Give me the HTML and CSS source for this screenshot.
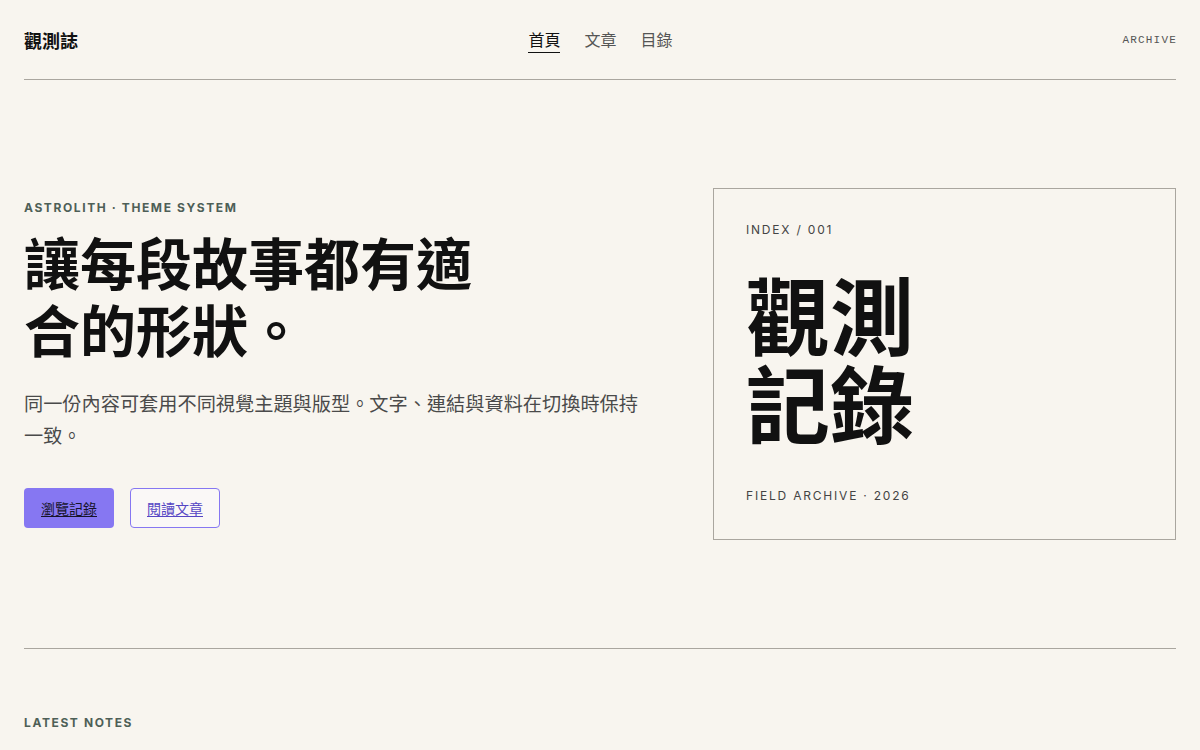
FILE: index.html
```html
<!DOCTYPE html>
<html lang="zh-Hant">
<head>
<meta charset="utf-8">
<title>觀測誌</title>
<link rel="stylesheet" href="styles.css">
</head>
<body>
<div class="page">
  <header class="site-header">
    <a class="logo" href="#">觀測誌</a>
    <nav class="nav">
      <a class="nav-item active" href="#">首頁</a>
      <a class="nav-item" href="#">文章</a>
      <a class="nav-item" href="#">目錄</a>
    </nav>
    <a class="archive" href="#">ARCHIVE</a>
  </header>

  <section class="hero">
    <div class="hero-text">
      <p class="eyebrow">ASTROLITH · THEME SYSTEM</p>
      <h1 class="title">讓每段故事都有適合的形狀。</h1>
      <p class="lead">同一份內容可套用不同視覺主題與版型。文字、連結與資料在切換時保持一致。</p>
      <div class="actions">
        <a class="btn btn-primary" href="#">瀏覽記錄</a>
        <a class="btn btn-outline" href="#">閱讀文章</a>
      </div>
    </div>
    <div class="card">
      <p class="card-label">INDEX / 001</p>
      <p class="card-title">觀測<br>記錄</p>
      <p class="card-label">FIELD ARCHIVE · 2026</p>
    </div>
  </section>

  <section class="latest">
    <p class="eyebrow">LATEST NOTES</p>
  </section>
</div>
</body>
</html>
```

FILE: styles.css
```css
* { box-sizing: border-box; }
html, body { margin: 0; padding: 0; }
body {
  background: #f8f5ef;
  color: #111;
  font-family: "Inter", "Noto Sans CJK TC", sans-serif;
}
.page { padding: 0 24px; }
p { margin: 0; }
a { color: inherit; text-decoration: none; }

.site-header {
  height: 80px;
  display: flex;
  align-items: center;
  justify-content: space-between;
  border-bottom: 1px solid #aaa69f;
}
.logo {
  font-size: 18px;
  font-weight: 700;
  color: #111;
  width: 200px;
}
.nav {
  display: flex;
  gap: 24px;
  padding-top: 2px;
}
.nav-item {
  font-size: 16px;
  color: #555;
  line-height: 22px;
  padding-bottom: 1px;
  border-bottom: 1px solid transparent;
}
.nav-item.active {
  color: #111;
  border-bottom-color: #111;
}
.archive {
  width: 200px;
  text-align: right;
  font-family: "Courier New", Courier, "Nimbus Mono PS", "FreeMono", monospace;
  font-size: 11px;
  letter-spacing: 1.2px;
  margin-right: -1px;
  color: #555;
}

.hero {
  display: grid;
  grid-template-columns: minmax(0, 1fr) 463px;
  gap: 72px;
  align-items: center;
  padding: 108px 0;
  border-bottom: 1px solid #aaa69f;
}
.eyebrow {
  font-size: 12px;
  font-weight: 700;
  letter-spacing: 1.6px;
  color: #4e5f57;
  line-height: 16px;
}
.title {
  margin: 16px 0 0;
  font-size: 56px;
  line-height: 67px;
  font-weight: 700;
  max-width: 470px;
  color: #111;
}
.lead {
  margin-top: 22px;
  font-size: 19.2px;
  line-height: 32px;
  color: #4a4a4a;
}
.actions {
  display: flex;
  gap: 16px;
  margin-top: 36px;
}
.btn {
  display: inline-flex;
  align-items: center;
  justify-content: center;
  width: 90px;
  height: 40px;
  border-radius: 4px;
  font-size: 14px;
  text-decoration: underline;
  text-underline-offset: 2px;
}
.btn-primary {
  background: #8677f2;
  color: #16142b;
}
.btn-outline {
  border: 1px solid #8677f2;
  color: #5546c4;
  background: #faf8f7;
}

.card {
  border: 1px solid #aaa69f;
  height: 352px;
  padding: 33px 32px 35px;
  display: flex;
  flex-direction: column;
  justify-content: space-between;
}
.card-label {
  font-size: 12px;
  letter-spacing: 1.8px;
  color: #444;
  line-height: 16px;
}
.card-title {
  font-size: 84px;
  line-height: 88px;
  font-weight: 700;
  color: #111;
}

.latest {
  padding-top: 66px;
}
```
